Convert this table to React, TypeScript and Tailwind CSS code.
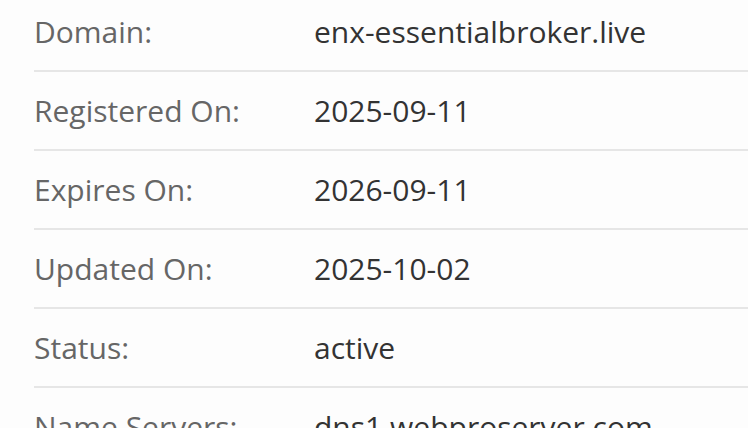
import React from 'react';

const rows: { label: string; value: string }[] = [
  { label: 'Domain:', value: 'enx-essentialbroker.live' },
  { label: 'Registered On:', value: '2025-09-11' },
  { label: 'Expires On:', value: '2026-09-11' },
  { label: 'Updated On:', value: '2025-10-02' },
  { label: 'Status:', value: 'active' },
  { label: 'Name Servers:', value: 'dns1.webproserver.com' },
];

export default function App() {
  return (
    <div className="w-[748px] h-[428px] overflow-hidden bg-[#fdfdfd] font-['Open_Sans',sans-serif]">
      <div className="-mt-[7px] pl-[34px]">
        {rows.map((row) => (
          <div key={row.label} className="flex items-center h-[79px] border-b-2 border-[#e6e6e6] text-[30px]">
            <div className="w-[280px] shrink-0 text-[#666666]">{row.label}</div>
            <div className="text-[#333333] whitespace-nowrap">{row.value}</div>
          </div>
        ))}
      </div>
    </div>
  );
}
